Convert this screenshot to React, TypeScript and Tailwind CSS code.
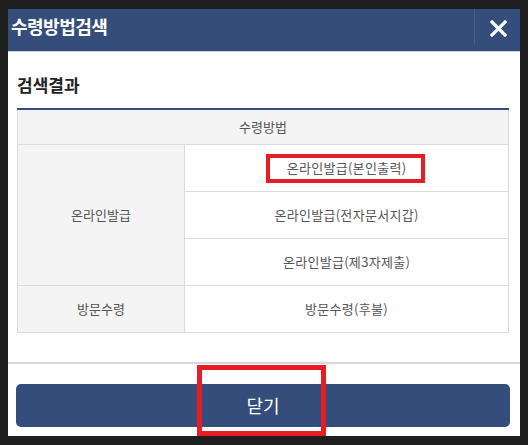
import type React from 'react';

const font = { fontFamily: '"Noto Sans CJK KR", "Noto Sans", sans-serif' };

const methods = ['온라인발급(본인출력)', '온라인발급(전자문서지갑)', '온라인발급(제3자제출)'];

const App: React.FC = () => {
  return (
    <div className="w-[528px] h-[445px] bg-[#1e1e1e] pt-[9px] pl-[8px]" style={font}>
      <div className="relative flex flex-col w-[512px] h-[427px] bg-white">
        {/* 헤더 */}
        <div className="flex h-[43px] bg-[#344d7a] border-b border-[#d2d2d2]">
          <h1 className="flex-1 pl-[3px] pt-[6px] text-[18px] font-bold leading-[22px] text-white tracking-[-0.5px]">
            수령방법검색
          </h1>
          <div className="w-[46px] h-[36px] border-l border-[#4a5f86] flex items-center justify-center pt-[2px] pl-[2px]">
            <svg width="17" height="17" viewBox="0 0 17 17">
              <path d="M2 2L15 15M15 2L2 15" stroke="white" strokeWidth="3.2" strokeLinecap="square" />
            </svg>
          </div>
        </div>

        {/* 본문 */}
        <div className="flex-1 pl-[9px] pr-[11px] border-b-2 border-[#d8d8d8]">
          <h2 className="pt-[22px] pb-[12px] text-[17px] font-bold leading-[22px] text-[#222]">검색결과</h2>
          <table className="w-full border-collapse border-t-2 border-[#344d7a] text-[13px] text-[#555]">
            <thead>
              <tr className="h-[35px] bg-[#f4f4f4]">
                <th colSpan={2} className="border border-[#dcdcdc] border-t-0 font-normal">수령방법</th>
              </tr>
            </thead>
            <tbody>
              {methods.map((m, i) => (
                <tr key={m} className="h-[47px]">
                  {i === 0 && (
                    <td rowSpan={3} className="w-[167px] bg-[#f4f4f4] border border-[#dcdcdc] text-center">
                      온라인발급
                    </td>
                  )}
                  <td className="border border-[#dcdcdc] text-center tracking-[0.3px]">{m}</td>
                </tr>
              ))}
              <tr className="h-[47px]">
                <td className="w-[167px] bg-[#f4f4f4] border border-[#dcdcdc] text-center">방문수령</td>
                <td className="border border-[#dcdcdc] text-center tracking-[0.3px]">방문수령(후불)</td>
              </tr>
            </tbody>
          </table>
        </div>

        {/* 하단 버튼 */}
        <div className="pt-[20px] pb-[9px] pl-[8px] pr-[10px]">
          <button className="w-full h-[43px] rounded-[5px] bg-[#344d7a] text-white text-[18px]">닫기</button>
        </div>

        {/* 강조 표시 */}
        <div className="absolute left-[258px] top-[145px] w-[159px] h-[29px] border-[4px] border-[#e81c24]" />
        <div className="absolute left-[189px] top-[356px] w-[129px] h-[71px] border-[5px] border-[#e81c24]" />
      </div>
    </div>
  );
};

export default App;
